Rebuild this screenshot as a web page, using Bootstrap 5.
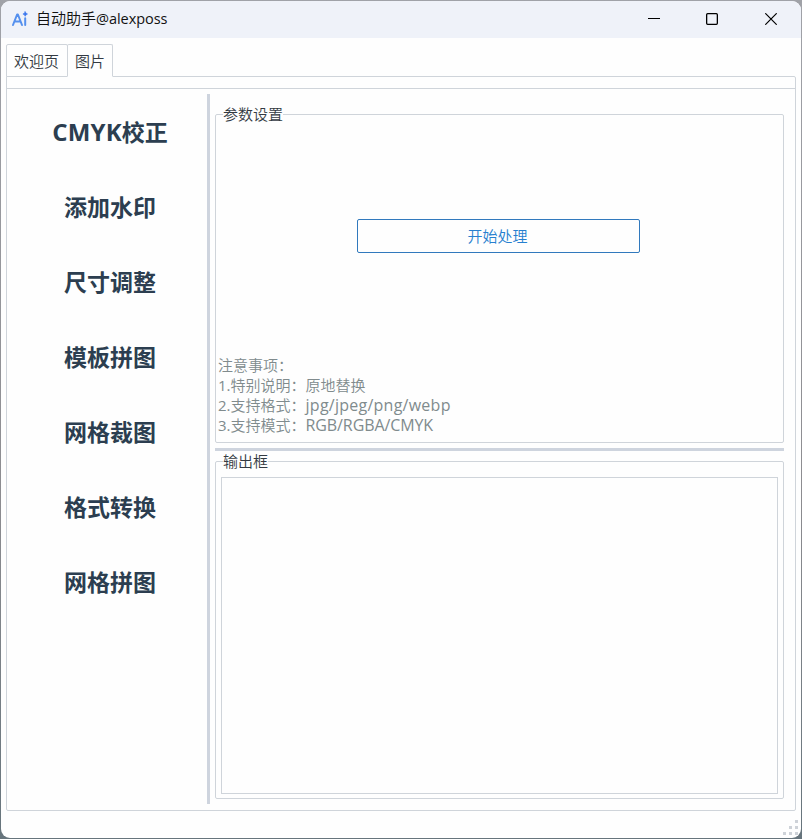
<!DOCTYPE html>
<html lang="zh-CN">
<head>
<meta charset="utf-8">
<meta name="viewport" content="width=device-width, initial-scale=1">
<title>自动助手@alexposs</title>
<link href="https://cdn.jsdelivr.net/npm/bootstrap@5.3.0/dist/css/bootstrap.min.css" rel="stylesheet">
<style>
html, body { height: 100%; }
body { background: linear-gradient(#a0a2a8, #8c8c90 60%, #66747c); font: 350 15px/20px "Open Sans", "Noto Sans CJK SC", sans-serif; color: #333a42; padding: 1px; }
.app-window { background: #fefefe; border-radius: 9px; }
.title-bar { height: 37px; background: #eff2f9; color: #111; padding: 0 1px 2px 10px; }
.title-bar .caption { font-size: 15px; margin-left: 7px; }
.title-bar .latin { font-size: 14.5px; font-weight: 400; letter-spacing: -.05px; }
.win-btn { width: 58.5px; height: 35px; color: #000; }
.page-tabs { margin: 6px 0 -1px 5px; position: relative; }
.page-tabs .nav-link { height: 33px; padding: 6px 7px 0; border: 1px solid #cfd4da; border-radius: 2px 2px 0 0; color: #333a42; background: #fefefe; line-height: 20px; }
.page-tabs .nav-item:first-child .nav-link { padding-right: 8px; }
.page-tabs .nav-item + .nav-item .nav-link { margin-left: -1px; }
.page-tabs .nav-link.active { border-bottom-color: #fefefe; }
.pane { margin: 0 5px 0 5px; border: 1px solid #cfd4da; border-radius: 0 2px 2px 2px; height: 735px; }
.pane-rule { height: 12px; border-bottom: 1px solid #cfd4da; }
.pane-body { padding: 5px 11px 6px 0; }
.side { width: 200px; padding: 1px 0 0 6px; }
.side .side-link { height: 75px; font-size: 23px; font-weight: 700; color: #2c3e50; line-height: 75px; }
.side .latin { font-size: 24px; line-height: 1; letter-spacing: .2px; }
.split-v { width: 3px; background: #ced4de; margin-right: 5px; }
.split-h { height: 3px; background: #ced4de; }
.group { border: 1px solid #cfd4da; border-radius: 2px; }
.group-title { left: 7px; top: -10px; background: #fefefe; line-height: 19px; }
.group-one { height: 329px; margin: 20px 0 5px; }
.group-two { height: 338px; margin-top: 10px; padding: 15px 5px 4px; }
.start-btn { --bs-btn-color: #2780cf; --bs-btn-border-color: #3179bd; --bs-btn-border-radius: 2px; --bs-btn-font-weight: 350; width: 283px; height: 34px; padding: 0 2px 0 0; font-size: 15px; margin: 104px 0 0 141px; }
.notes { color: #808b8d; padding-left: 2px; margin-bottom: 7px; }
.notes .num { font-weight: 400; }
.notes .formats, .notes .modes { font-size: 16px; font-weight: 400; line-height: 1; }
.notes .formats { letter-spacing: .25px; }
.notes .modes { letter-spacing: -.1px; }
.output { border: 1px solid #cfd4da; background: #fefefe; }
.grip { right: 3px; bottom: 3px; }
</style>
</head>
<body>
<div class="app-window position-relative h-100 d-flex flex-column overflow-hidden">
  <header class="title-bar d-flex align-items-center flex-shrink-0">
    <svg width="18" height="18" viewBox="0 0 18 18" fill="none" stroke="#5590ee" stroke-width="2" stroke-linecap="round" stroke-linejoin="round"><path d="M2 15 6.1 4.5h.8L11 15M4 11.6h5M14.2 8.2V15"/><path d="M14.2 1.7 15 3.2l1.5.8-1.5.8-.8 1.5-.8-1.5-1.5-.8 1.5-.8z" fill="#3976ee" stroke="#3976ee" stroke-width=".6"/></svg>
    <span class="caption">自动助手<span class="latin">@alexposs</span></span>
    <div class="d-flex ms-auto">
      <div class="win-btn d-flex align-items-center justify-content-center"><svg width="12" height="12" stroke="currentColor" stroke-width="1.2"><path d="M0 5.5h12"/></svg></div>
      <div class="win-btn d-flex align-items-center justify-content-center"><svg width="12" height="12" fill="none" stroke="currentColor" stroke-width="1.3"><rect x=".65" y=".65" width="10.7" height="10.7" rx="1"/></svg></div>
      <div class="win-btn d-flex align-items-center justify-content-center"><svg width="12" height="12" stroke="currentColor" stroke-width="1.2"><path d="M.3.3l11.4 11.4M11.7.3.3 11.7"/></svg></div>
    </div>
  </header>
  <ul class="nav page-tabs">
    <li class="nav-item"><a class="nav-link">欢迎页</a></li>
    <li class="nav-item"><a class="nav-link active">图片</a></li>
  </ul>
  <main class="pane d-flex flex-column">
    <div class="pane-rule flex-shrink-0"></div>
    <div class="pane-body d-flex flex-grow-1">
      <nav class="side nav flex-column flex-nowrap text-center">
        <a class="side-link text-decoration-none"><span class="latin">CMYK</span>校正</a>
        <a class="side-link text-decoration-none">添加水印</a>
        <a class="side-link text-decoration-none">尺寸调整</a>
        <a class="side-link text-decoration-none">模板拼图</a>
        <a class="side-link text-decoration-none">网格裁图</a>
        <a class="side-link text-decoration-none">格式转换</a>
        <a class="side-link text-decoration-none">网格拼图</a>
      </nav>
      <div class="split-v"></div>
      <div class="flex-grow-1">
        <section class="group group-one position-relative d-flex flex-column">
          <span class="group-title position-absolute">参数设置</span>
          <button type="button" class="btn btn-outline-primary start-btn">开始处理</button>
          <div class="notes mt-auto">注意事项：<br><span class="num">1.</span>特别说明：原地替换<br><span class="num">2.</span>支持格式：<span class="formats">jpg/jpeg/png/webp</span><br><span class="num">3.</span>支持模式：<span class="modes">RGB/RGBA/CMYK</span></div>
        </section>
        <div class="split-h"></div>
        <section class="group group-two position-relative">
          <span class="group-title position-absolute">输出框</span>
          <div class="output h-100"></div>
        </section>
      </div>
    </div>
  </main>
  <svg class="grip position-absolute" width="15" height="15" fill="#ced2d8"><path d="M12 0h3v3h-3zM6 6h3v3H6zM12 6h3v3h-3zM0 12h3v3H0zM6 12h3v3H6zM12 12h3v3h-3z"/></svg>
</div>
<script src="https://cdn.jsdelivr.net/npm/bootstrap@5.3.0/dist/js/bootstrap.bundle.min.js"></script>
</body>
</html>
